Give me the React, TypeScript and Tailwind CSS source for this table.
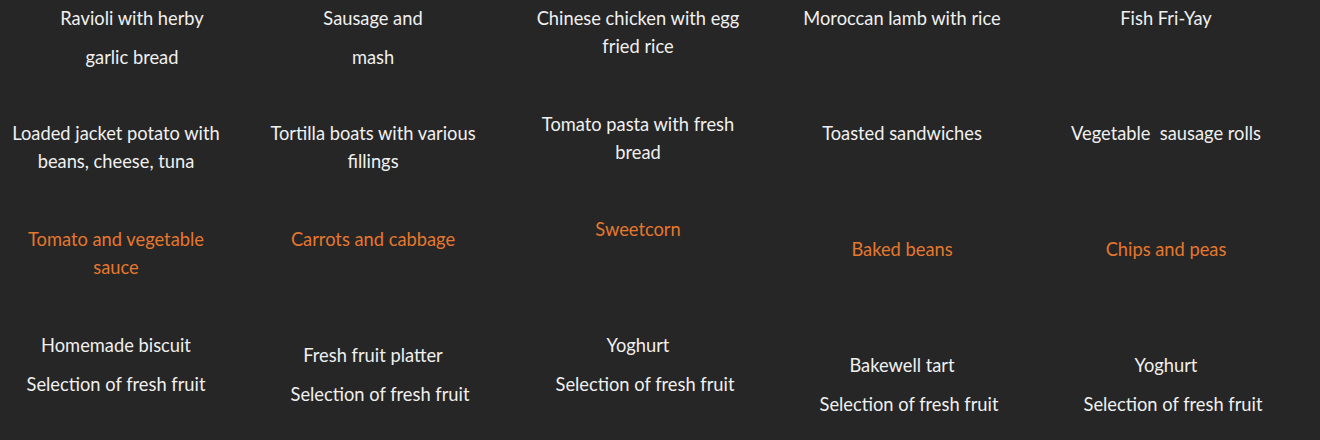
import React from "react";

type Cell = {
  lines: string[][];
  pt: string;
  shift: string;
  orange?: boolean;
  nudge?: boolean;
};

const rows: { h: string; cells: Cell[] }[] = [
  {
    h: "h-[106px]",
    cells: [
      { lines: [["Ravioli with herby"], ["garlic bread"]], pt: "pt-[4px]", shift: "pr-0" },
      { lines: [["Sausage and"], ["mash"]], pt: "pt-[4px]", shift: "pr-[46px]" },
      { lines: [["Chinese chicken with egg", "fried rice"]], pt: "pt-[4px]", shift: "pr-[44px]" },
      { lines: [["Moroccan lamb with rice"]], pt: "pt-[4px]", shift: "pr-[44px]" },
      { lines: [["Fish Fri-Yay"]], pt: "pt-[4px]", shift: "pr-[44px]" },
    ],
  },
  {
    h: "h-[106px]",
    cells: [
      { lines: [["Loaded jacket potato with", "beans, cheese, tuna"]], pt: "pt-[13px]", shift: "pr-[32px]" },
      { lines: [["Tortilla boats with various", "fillings"]], pt: "pt-[13px]", shift: "pr-[46px]" },
      { lines: [["Tomato pasta with fresh", "bread"]], pt: "pt-[4px]", shift: "pr-[44px]" },
      { lines: [["Toasted sandwiches"]], pt: "pt-[13px]", shift: "pr-[44px]" },
      { lines: [["Vegetable\u00a0 sausage rolls"]], pt: "pt-[13px]", shift: "pr-[44px]" },
    ],
  },
  {
    h: "h-[106px]",
    cells: [
      { lines: [["Tomato and vegetable", "sauce"]], pt: "pt-[13px]", shift: "pr-[32px]", orange: true },
      { lines: [["Carrots and cabbage"]], pt: "pt-[13px]", shift: "pr-[46px]", orange: true },
      { lines: [["Sweetcorn"]], pt: "pt-[3px]", shift: "pr-[44px]", orange: true },
      { lines: [["Baked beans"]], pt: "pt-[23px]", shift: "pr-[44px]", orange: true },
      { lines: [["Chips and peas"]], pt: "pt-[23px]", shift: "pr-[44px]", orange: true },
    ],
  },
  {
    h: "h-[122px]",
    cells: [
      { lines: [["Homemade biscuit"], ["Selection of fresh fruit"]], pt: "pt-[13px]", shift: "pr-[32px]" },
      { lines: [["Fresh fruit platter"], ["Selection of fresh fruit"]], pt: "pt-[23px]", shift: "pr-[46px]", nudge: true },
      { lines: [["Yoghurt"], ["Selection of fresh fruit"]], pt: "pt-[13px]", shift: "pr-[44px]", nudge: true },
      { lines: [["Bakewell tart"], ["Selection of fresh fruit"]], pt: "pt-[33px]", shift: "pr-[44px]", nudge: true },
      { lines: [["Yoghurt"], ["Selection of fresh fruit"]], pt: "pt-[33px]", shift: "pr-[44px]", nudge: true },
    ],
  },
];

export default function App() {
  return (
    <div className="w-[1320px] h-[440px] bg-[#262626] overflow-hidden font-['Lato','Open_Sans',sans-serif] text-[18.3px]">
      {rows.map((row, ri) => (
        <div key={ri} className={`grid grid-cols-5 ${row.h}`}>
          {row.cells.map((cell, ci) => (
            <div
              key={ci}
              className={`${cell.pt} ${cell.shift} flex flex-col items-center text-center ${
                cell.orange ? "text-[#e5772e]" : "text-[#f0f0f0]"
              }`}
            >
              {cell.lines.map((para, pi) => (
                <p
                  key={pi}
                  className={pi > 0 ? (cell.nudge ? "mt-[11px] pl-[14px]" : "mt-[11px]") : ""}
                >
                  {para.map((line, li) => (
                    <span key={li} className="block leading-[28px] whitespace-nowrap">
                      {line}
                    </span>
                  ))}
                </p>
              ))}
            </div>
          ))}
        </div>
      ))}
    </div>
  );
}
